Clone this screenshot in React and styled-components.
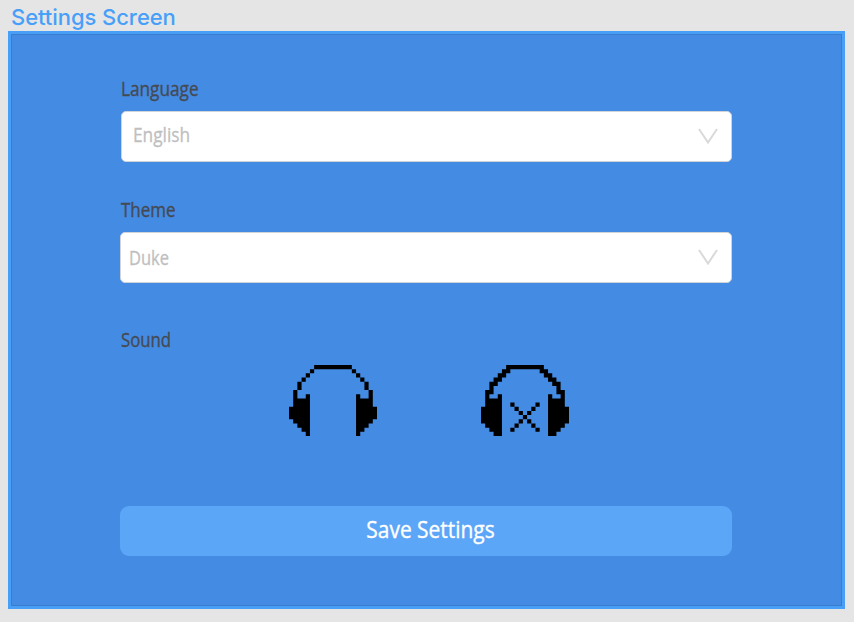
import React from "react";
import styled, { createGlobalStyle } from "styled-components";

const Global = createGlobalStyle`
  * { box-sizing: border-box; }
  body { margin: 0; background: #e5e5e5; }
`;

const Page = styled.div`
  width: 854px;
  height: 622px;
  padding: 4px 9px 0 8px;
  overflow: hidden;
  font-family: "Open Sans", sans-serif;
`;

const FrameTitle = styled.div`
  height: 27px;
  padding-left: 3px;
  font: 450 22px/27px "Inter", sans-serif;
  letter-spacing: -0.06px;
  color: #489ff8;
  white-space: nowrap;
`;

const Frame = styled.main`
  height: 578px;
  padding: 43px 110px 0 108px;
  display: flex;
  flex-direction: column;
  background: #448be3;
  border: 3px solid #489ff8;
  box-shadow: inset 0 0 0 1px #3b7dcd;
`;

const Condensed = styled.span`
  display: inline-block;
  white-space: nowrap;
  -webkit-text-stroke: 0.35px currentColor;
  transform: scaleX(${(p) => p.$scale});
  transform-origin: ${(p) => p.$origin || "left"} center;
`;

const Label = styled.label`
  height: 24px;
  margin: ${(p) => p.$top || 0}px 0 0 2px;
  font-size: 19.5px;
  line-height: 24px;
  color: #444a52;
`;

const Select = styled.div`
  height: 51px;
  margin: 10px 0 0 ${(p) => p.$left}px;
  padding: 0 13px 0 ${(p) => p.$pad}px;
  display: flex;
  align-items: center;
  justify-content: space-between;
  background: #fff;
  border: 1px solid #d0d3d8;
  border-radius: 5px;
  font-size: 19.5px;
  line-height: 24px;
  color: #bfbfbf;
`;

const Value = styled.div`
  padding-bottom: ${(p) => p.$lift || 0}px;
`;

const Arrow = styled.svg`
  width: 20px;
  height: 16px;
  margin-bottom: 1px;
  fill: none;
  stroke: #d9d9d9;
  stroke-width: 2;
`;

const SoundRow = styled.div`
  display: flex;
  gap: 104px;
  margin: 13px 0 0 170px;
`;

const Headphones = styled.svg`
  width: 88px;
  height: 71px;
  fill: #000;
`;

const SaveButton = styled.button`
  height: 50px;
  margin: 70px 0 0 1px;
  padding: 0 0 5px 9px;
  border: 0;
  border-radius: 9px;
  background: #5ca6f8;
  color: #fff;
  font: 400 23px/30px "Open Sans", sans-serif;
`;

const soundOn = [
  "......#########......",
  ".....#.........#.....",
  "....#...........#....",
  "...#.............#...",
  "..#...............#..",
  "..#...............#..",
  ".#.................#.",
  ".#..#...........#..#.",
  ".####...........####.",
  ".####...........####.",
  "#####...........#####",
  "#####...........#####",
  "#####...........#####",
  ".####...........####.",
  "..###...........###..",
  "...##...........##...",
  "....#...........#....",
];

const soundOff = [
  "......#########......",
  ".....##.......##.....",
  "....##.........##....",
  "...##...........##...",
  "..##.............##..",
  "..#...............#..",
  ".##...............##.",
  ".#..#...........#..#.",
  ".####...........####.",
  ".####..#.....#..####.",
  "#####...#...#...#####",
  "#####....#.#....#####",
  "#####.....#.....#####",
  "#####....#.#....#####",
  ".####...#...#...####.",
  "..###..#.....#..###..",
  "...##...........##...",
];

const toPath = (rows) =>
  rows
    .flatMap((row, y) =>
      [...row.matchAll(/#+/g)].map(
        (m) => `M${m.index} ${y}h${m[0].length}v1h-${m[0].length}z`
      )
    )
    .join("");

const PixelIcon = ({ rows, label }) => (
  <Headphones viewBox="0 0 21 17" preserveAspectRatio="none" role="img" aria-label={label}>
    <path d={toPath(rows)} />
  </Headphones>
);

const Chevron = () => (
  <Arrow viewBox="0 0 20 16">
    <path d="M1 1 10 14.5 19 1" />
  </Arrow>
);

export default function App() {
  return (
    <Page>
      <Global />
      <FrameTitle>Settings Screen</FrameTitle>
      <Frame>
        <Label><Condensed $scale={0.883}>Language</Condensed></Label>
        <Select $left={2} $pad={11}>
          <Value $lift={3}><Condensed $scale={0.885}>English</Condensed></Value>
          <Chevron />
        </Select>
        <Label $top={36}><Condensed $scale={0.87}>Theme</Condensed></Label>
        <Select $left={1} $pad={8}>
          <Value><Condensed $scale={0.845}>Duke</Condensed></Value>
          <Chevron />
        </Select>
        <Label $top={45}><Condensed $scale={0.86}>Sound</Condensed></Label>
        <SoundRow>
          <PixelIcon rows={soundOn} label="Sound on" />
          <PixelIcon rows={soundOff} label="Sound off" />
        </SoundRow>
        <SaveButton><Condensed $scale={0.91} $origin="center">Save Settings</Condensed></SaveButton>
      </Frame>
    </Page>
  );
}
